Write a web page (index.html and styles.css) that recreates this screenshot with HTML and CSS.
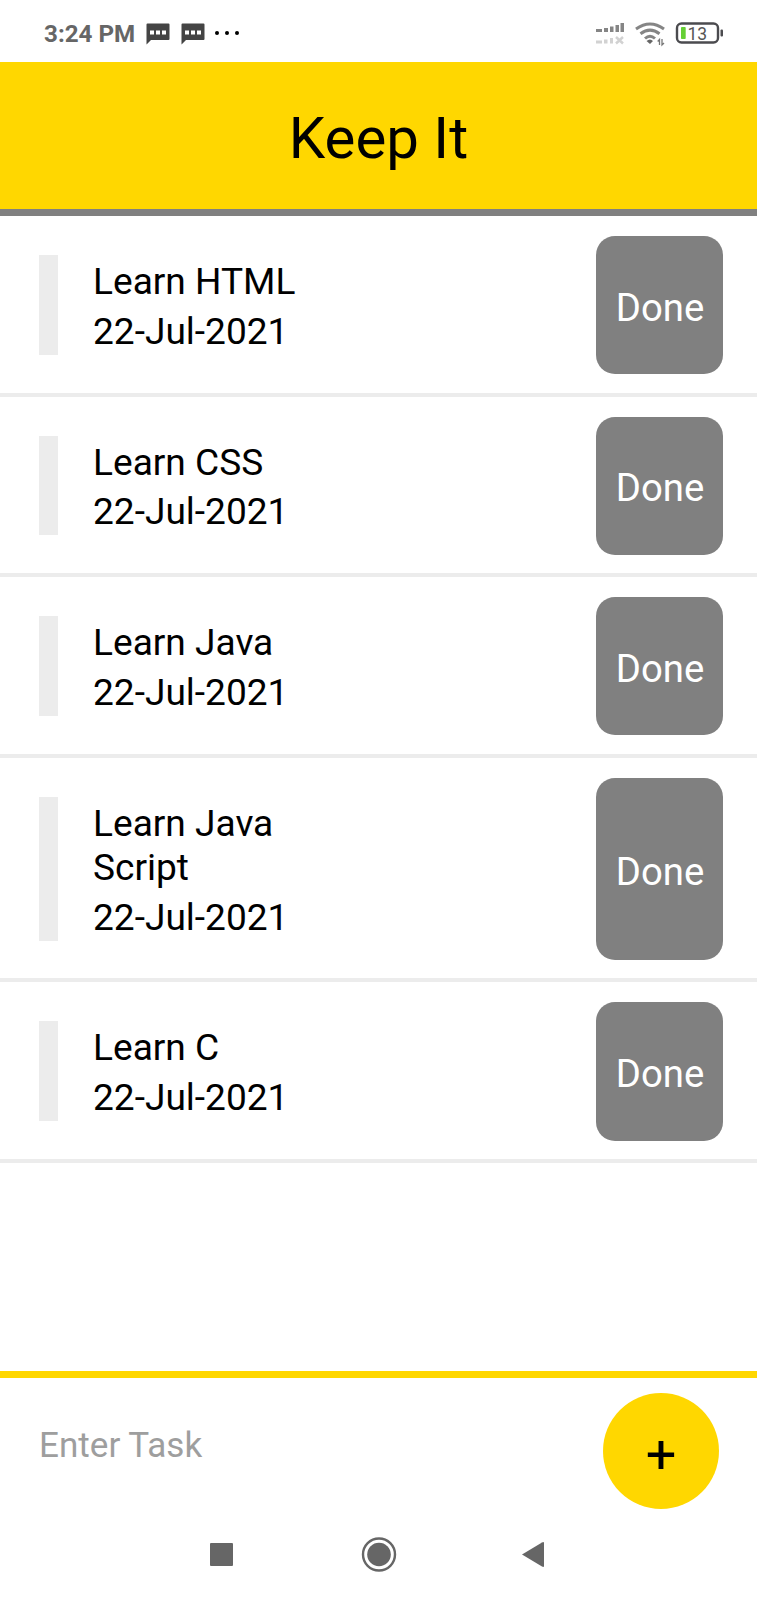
FILE: index.html
```html
<!DOCTYPE html>
<html lang="en">
<head>
<meta charset="utf-8">
<title>Keep It</title>
<link rel="stylesheet" href="styles.css">
</head>
<body>
<div class="screen">
  <div class="status">
    <span class="clock">3:24 PM</span>
    <svg class="chat" width="24" height="22" viewBox="0 0 24 22"><path d="M0.500 1.500Q0.500 0.500 1.500 0.500H22.500Q23.500 0.500 23.500 1.500V16Q23.500 17 22.500 17H5L0.500 21.500Z" fill="#444"/><path d="M4 7.500h4v4H4zM10 7.500h4v4h-4zM16 7.500h4v4h-4z" fill="#fff"/></svg>
    <svg class="chat second" width="24" height="22" viewBox="0 0 24 22"><path d="M0.500 1.500Q0.500 0.500 1.500 0.500H22.500Q23.500 0.500 23.500 1.500V16Q23.500 17 22.500 17H5L0.500 21.500Z" fill="#444"/><path d="M4 7.500h4v4H4zM10 7.500h4v4h-4zM16 7.500h4v4h-4z" fill="#fff"/></svg>
    <svg class="more" width="26" height="6" viewBox="0 0 26 6"><circle cx="3" cy="3" r="2"/><circle cx="13" cy="3" r="2"/><circle cx="23" cy="3" r="2"/></svg>
    <svg class="signals" width="145" height="30" viewBox="580 18 145 30">
      <g fill="#858585"><path d="M596 29h6v3h-6zM604 28h4v4h-4zM610 26.500h3.500V32H610zM615.500 25h3.500v7h-3.500zM620.500 23h3.500v9h-3.500z"/></g>
      <g fill="#d2d2d2"><path d="M596 40.500h6v3h-6zM604 39.500h3.500v4H604zM610 38h3v5.500h-3z"/></g>
      <path d="M616 37l7 6.500M623 37l-7 6.500" stroke="#d2d2d2" stroke-width="2.500"/>
      <g fill="none" stroke="#858585" stroke-width="3"><path d="M636 29Q650 19 664 29M640.500 33.800Q650 26.500 659.500 33.800M645 38.500Q650 34 655 38.500"/></g>
      <path d="M646.500 41Q650 38 653 41L650 44Z" fill="#666"/>
      <path d="M657.700 41.500L659.500 39.500V45M662 39v6l2-2" fill="none" stroke="#777" stroke-width="1.300"/>
      <rect x="677" y="23.500" width="41" height="19" rx="4.500" fill="#fff" stroke="#4b4b4f" stroke-width="2.400"/>
      <rect x="681" y="27" width="4.700" height="12" rx="0.800" fill="#65cf35"/>
      <rect x="720.500" y="29.500" width="2.500" height="7" rx="1" fill="#4b4b4f"/>
      <text class="charge" x="687.500" y="39.800">13</text>
    </svg>
  </div>
  <header class="header">Keep It</header>
  <main class="list">
    <div class="row"><div class="task"><div>Learn HTML</div><div class="date">22-Jul-2021</div></div><div class="done">Done</div></div>
    <div class="row"><div class="task"><div>Learn CSS</div><div class="date">22-Jul-2021</div></div><div class="done">Done</div></div>
    <div class="row"><div class="task"><div>Learn Java</div><div class="date">22-Jul-2021</div></div><div class="done">Done</div></div>
    <div class="row tall"><div class="task"><div>Learn Java Script</div><div class="date">22-Jul-2021</div></div><div class="done">Done</div></div>
    <div class="row"><div class="task"><div>Learn C</div><div class="date">22-Jul-2021</div></div><div class="done">Done</div></div>
  </main>
  <footer class="entry"><span class="hint">Enter Task</span><div class="add"><span class="plus">+</span></div></footer>
  <nav class="nav">
    <svg width="757" height="60" viewBox="0 1525 757 60" fill="#666">
      <rect x="210" y="1543" width="23" height="23" rx="1"/>
      <circle cx="379" cy="1554.500" r="11.800"/>
      <circle cx="379" cy="1554.500" r="16" fill="none" stroke="#666" stroke-width="2.400"/>
      <path d="M522 1554.500L542 1542.500Q544 1541.500 544 1543V1566Q544 1567.500 542 1566.500Z"/>
    </svg>
  </nav>
</div>
</body>
</html>
```
FILE: styles.css
```css
body { margin: 0; background: #fff; font-family: Roboto, "Liberation Sans", sans-serif; color: #000; }
.screen { display: flex; flex-direction: column; width: 757px; height: 1600px; overflow: hidden; }
.status { display: flex; box-sizing: border-box; height: 62px; padding: 18px 32px 0 44px; align-items: flex-start; }
.clock { width: 102px; color: #666; font-size: 24.2px; font-weight: 700; line-height: 32px; white-space: nowrap; }
.chat { margin-top: 5px; }
.second { margin-left: 11px; }
.more { margin: 12px 0 0 9px; }
.signals { margin-left: auto; }
.charge { font-size: 17.5px; fill: #555; }
.header { box-sizing: border-box; height: 154px; border-bottom: 7px solid #808080; background: #ffd700; font-size: 58.2px; line-height: 153px; text-align: center; }
.list { flex: 1; }
.row { display: flex; box-sizing: border-box; min-height: 180.6px; padding: 20px 34px 18.4px 39px; border-bottom: 4px solid #ececec; align-items: stretch; justify-content: space-between; }
.tall { min-height: 224.6px; }
.task { box-sizing: border-box; width: 272px; margin: 19px 0 19.4px; padding: 5px 0 0 35px; border-left: 19px solid #ececec; font-size: 37.1px; line-height: 44px; }
.date { margin-top: 5.8px; }
.done { display: flex; width: 127px; border-radius: 19px; background: #808080; color: #fff; font-size: 38.3px; align-items: center; justify-content: center; padding: 4.4px 0 0 1px; box-sizing: border-box; }
.entry { display: flex; box-sizing: border-box; height: 154px; padding: 15px 38px 0 39px; border-top: 7px solid #ffd700; justify-content: space-between; }
.hint { margin-top: 30px; color: #9e9e9e; font-size: 35.1px; line-height: 44px; }
.add { display: flex; width: 116px; height: 116px; border-radius: 50%; background: #ffd700; align-items: center; justify-content: center; }
.plus { padding-top: 7px; font-size: 54px; line-height: 60px; }
.nav { height: 75px; }
```
